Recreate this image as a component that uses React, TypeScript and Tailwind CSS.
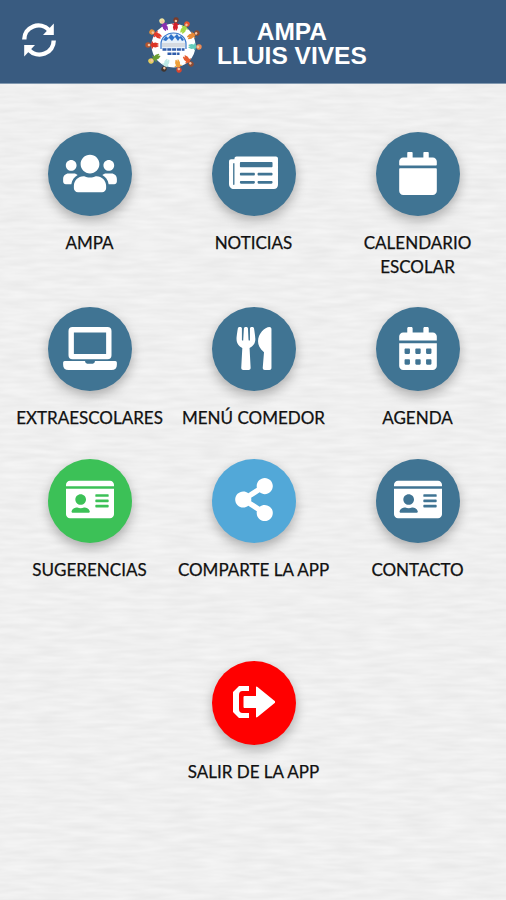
import React from "react";
import { IconType } from "react-icons";
import {
  FaCalendar,
  FaCalendarAlt,
  FaIdCard,
  FaNewspaper,
  FaShareAlt,
  FaUsers,
  FaUtensils,
} from "react-icons/fa";

interface MenuItem {
  label: string;
  icon: IconType | React.FC<{ className?: string }>;
  color: string;
  iconClass: string;
}

const LaptopIcon: React.FC<{ className?: string }> = ({ className }) => (
  <svg viewBox="0 0 640 512" fill="currentColor" className={className}>
    <path
      fillRule="evenodd"
      d="M112 0h416q48 0 48 48v288q0 48-48 48H112q-48 0-48-48V48Q64 0 112 0ZM128 64v256h384V64Z"
    />
    <path d="M18 406H260q4 32 28 32h64q24 0 28-32H622q18 0 18 18v24q0 64-64 64H64Q0 512 0 448v-24q0-18 18-18Z" />
  </svg>
);

const ExitIcon: React.FC<{ className?: string }> = ({ className }) => (
  <svg viewBox="0 0 42 32" fill="currentColor" className={className}>
    <path d="M16 0v5H9.500Q6 5 6 9v14q0 4 3.500 4H16v5H6L0 26V6L6 0Z" />
    <path d="M10.500 11q0-1 1-1H23V1.500q0-1.500 1.500-.5L42 15.300q.7.700 0 1.400L24.500 31q-1.500 1-1.500-.5V22H11.500q-1 0-1-1Z" />
  </svg>
);

const RefreshIcon: React.FC<{ className?: string }> = ({ className }) => (
  <svg viewBox="0 0 34 34" className={className}>
    <path d="M2.300 16.500A14.200 13.800 0 0 1 27 7" fill="none" stroke="currentColor" strokeWidth="4.400" />
    <path d="M31.800 .5v11.500H21Z" fill="currentColor" />
    <path d="M31.700 17.500A14.200 13.800 0 0 1 7 27" fill="none" stroke="currentColor" strokeWidth="4.400" />
    <path d="M2.200 33.500V22H13Z" fill="currentColor" />
  </svg>
);

// children holding hands around the school badge
const kids = [
  { x: 17, y: 5, head: "#efe3a0", body: "#8b2fb0" },
  { x: 31, y: 4, head: "#7a3b2a", body: "#d3202c" },
  { x: 42, y: 8, head: "#e8542c", body: "#a6d845" },
  { x: 52, y: 17, head: "#8a4a2c", body: "#e88a35" },
  { x: 54, y: 31, head: "#ee8b55", body: "#62cdbb" },
  { x: 46, y: 48, head: "#8d4b34", body: "#e55b2d" },
  { x: 34, y: 54, head: "#d9452e", body: "#f0a03a" },
  { x: 19, y: 53, head: "#40352f", body: "#bde9e6" },
  { x: 6, y: 45, head: "#e6cd5c", body: "#6a9e32" },
  { x: 3, y: 29, head: "#b4542d", body: "#dc3526" },
  { x: 7, y: 16, head: "#e2903c", body: "#e23b2a" },
];

const Logo = () => (
  <svg viewBox="0 0 58 58" className="h-[58px] w-[58px]">
    <circle cx="28.500" cy="29.500" r="22" fill="#fff" />
    {kids.map((kid, i) => {
      const angle = (Math.atan2(29 - kid.y, 29 - kid.x) * 180) / Math.PI - 90;
      return (
        <g key={i} transform={`translate(${kid.x} ${kid.y}) rotate(${angle})`}>
          <path d="M-1.500 2.500h3l1 5l-1 3h-1l-.5-2l-.5 2h-1l-1-3Z" fill={kid.body} />
          <path d="M-3.500 4L0 5L3.500 4" fill="none" stroke={kid.body} strokeWidth="1.200" />
          <circle r="2.700" fill={kid.head} />
          <circle cy="1" r="1.300" fill="#f3c3a2" />
        </g>
      );
    })}
    <path d="M16 33V28a12.500 11 0 0 1 25 0v5" fill="#e6f1fb" stroke="#3a78cc" strokeWidth="1.200" />
    <path d="M18 24l3-4l2 2l3-4l3 3l3-3l2 3l2-1l3 4l-2 1l-2-3l-2 3l-3-4l-3 4l-3-3l-3 3Z" fill="#2e72ca" />
    <rect x="17" y="27" width="23" height="4" fill="#d5dae0" />
    <path d="M17.500 33.500h22M22.500 37.800h12" fill="none" stroke="#2f5cab" strokeWidth="2.400" strokeDasharray="4 .8" />
  </svg>
);

const PaperTexture = () => (
  <svg className="absolute inset-0 h-full w-full" aria-hidden="true">
    <filter id="paper" x="0" y="0" width="100%" height="100%" colorInterpolationFilters="sRGB">
      <feTurbulence type="fractalNoise" baseFrequency="0.03 0.2" numOctaves="2" seed="8" />
      <feColorMatrix values="0.06 0 0 0 0.908  0.06 0 0 0 0.908  0.06 0 0 0 0.908  0 0 0 0 1" />
    </filter>
    <rect width="100%" height="100%" filter="url(#paper)" />
  </svg>
);

const rows: MenuItem[][] = [
  [
    { label: "AMPA", icon: FaUsers, color: "bg-[#407493]", iconClass: "h-[43px] w-[54px]" },
    { label: "NOTICIAS", icon: FaNewspaper, color: "bg-[#407493]", iconClass: "h-[43.500px] w-[49px]" },
    { label: "CALENDARIO ESCOLAR", icon: FaCalendar, color: "bg-[#407493]", iconClass: "h-[43px] w-[38px]" },
  ],
  [
    { label: "EXTRAESCOLARES", icon: LaptopIcon, color: "bg-[#407493]", iconClass: "h-[43px] w-[54px]" },
    { label: "MENÚ COMEDOR", icon: FaUtensils, color: "bg-[#407493]", iconClass: "h-[43px] w-[36px]" },
    { label: "AGENDA", icon: FaCalendarAlt, color: "bg-[#407493]", iconClass: "h-[43px] w-[38px]" },
  ],
  [
    { label: "SUGERENCIAS", icon: FaIdCard, color: "bg-[#3cc157]", iconClass: "h-[43px] w-[48px]" },
    { label: "COMPARTE LA APP", icon: FaShareAlt, color: "bg-[#52a8d8]", iconClass: "h-[43px] w-[38px]" },
    { label: "CONTACTO", icon: FaIdCard, color: "bg-[#407493]", iconClass: "h-[43px] w-[48px]" },
  ],
];

const exitItem: MenuItem = {
  label: "SALIR DE LA APP",
  icon: ExitIcon,
  color: "bg-[#ff0000]",
  iconClass: "h-8 w-[42px]",
};

const MenuButton: React.FC<{ item: MenuItem }> = ({ item }) => {
  const Icon = item.icon;
  return (
    <button className="flex w-[164px] flex-col items-center">
      <span
        className={`flex h-[84px] w-[84px] items-center justify-center rounded-full pb-[2px] text-white shadow-[0_5px_12px_rgba(0,0,0,0.28)] ${item.color}`}
      >
        <Icon className={item.iconClass} />
      </span>
      <span className="mt-[15px] max-w-[155px] text-center text-[17px] leading-6 text-[#111] [-webkit-text-stroke:0.25px_#111]">
        {item.label}
      </span>
    </button>
  );
};

export default function App() {
  return (
    <div className="flex h-[900px] w-[506px] flex-col overflow-hidden bg-[#efefef] font-['Lato',sans-serif]">
      <header className="flex h-[84px] shrink-0 items-center border-b border-[#8299b0] bg-[#395b80] pl-[22px] text-white">
        <RefreshIcon className="mb-[3px] h-[34px] w-[34px]" />
        <div className="ml-[89px] flex items-center pt-[6px]">
          <Logo />
          <h1 className="mb-[2px] ml-[14px] flex flex-col items-center font-['Liberation_Sans',Arial,sans-serif] text-[24.500px] leading-6 font-bold">
            <span>AMPA</span>
            <span>LLUIS VIVES</span>
          </h1>
        </div>
      </header>
      <main className="relative flex-1">
        <PaperTexture />
        <div className="relative flex flex-col items-center pt-12 pl-px">
          <div className="flex flex-col">
            {rows.map((row, i) => (
              <div key={i} className="mb-[28.400px] flex items-start">
                {row.map((item) => (
                  <MenuButton key={item.label} item={item} />
                ))}
              </div>
            ))}
          </div>
          <div className="mt-[51px]">
            <MenuButton item={exitItem} />
          </div>
        </div>
      </main>
    </div>
  );
}
